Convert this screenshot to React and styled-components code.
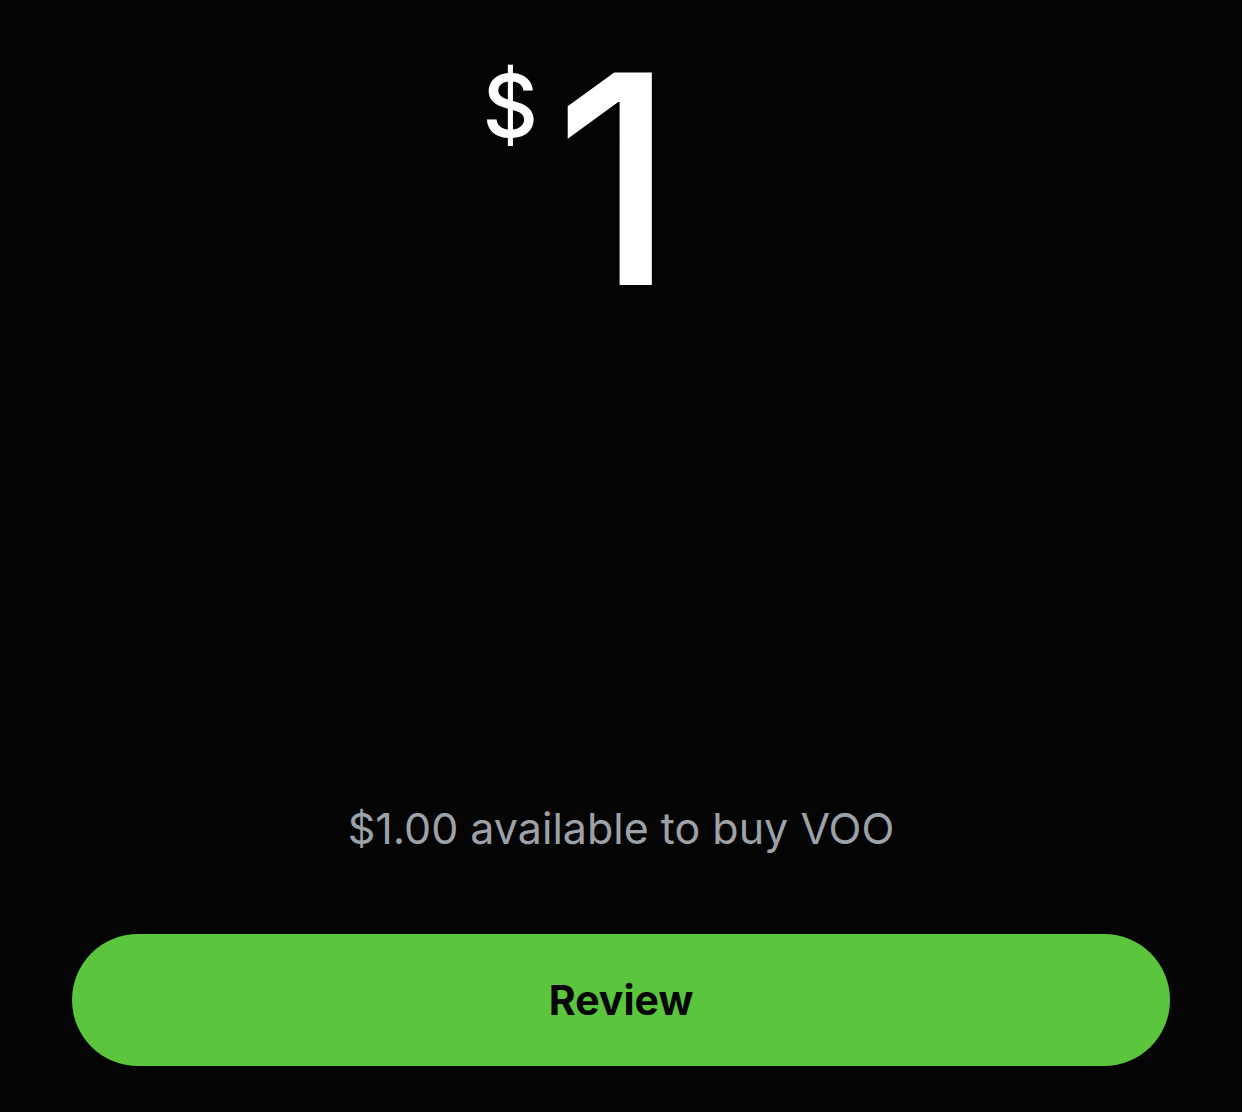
import React from 'react';
import styled, { createGlobalStyle } from 'styled-components';

const GlobalStyle = createGlobalStyle`
  html, body {
    margin: 0;
    padding: 0;
    background: #040405;
  }
  * { box-sizing: border-box; }
`

const Screen = styled.div`
  width: 1242px;
  height: 1112px;
  background: #040405;
  display: flex;
  flex-direction: column;
  align-items: center;
  font-family: Inter, "Noto Sans", sans-serif;
  overflow: hidden;
`

const Amount = styled.div`
  display: flex;
  align-items: flex-start;
  justify-content: center;
  gap: 16px;
  margin-top: 2px;
  margin-right: 84px;
  color: #ffffff;
`

const Currency = styled.span`
  font-size: 86px;
  font-weight: 500;
  line-height: normal;
  margin-top: 52px;
`

const Digits = styled.span`
  font-size: 292px;
  font-weight: 500;
  line-height: normal;
`

const Spacer = styled.div`
  flex: 1;
`

const Available = styled.p`
  margin: 0 0 80px 0;
  color: #9ca2a7;
  font-size: 43px;
  font-weight: 400;
`

const ReviewButton = styled.button`
  width: 1098px;
  height: 132px;
  margin-bottom: 46px;
  border: none;
  border-radius: 66px;
  background: #5bc53d;
  color: #060606;
  font-family: Inter, "Noto Sans", sans-serif;
  font-size: 41px;
  font-weight: 700;
  cursor: pointer;
`

const App = () => {
  return (
    <>
      <GlobalStyle />
      <Screen>
        <Amount>
          <Currency>$</Currency>
          <Digits>1</Digits>
        </Amount>
        <Spacer />
        <Available>$1.00 available to buy VOO</Available>
        <ReviewButton>Review</ReviewButton>
      </Screen>
    </>
  );
}

export default App;
